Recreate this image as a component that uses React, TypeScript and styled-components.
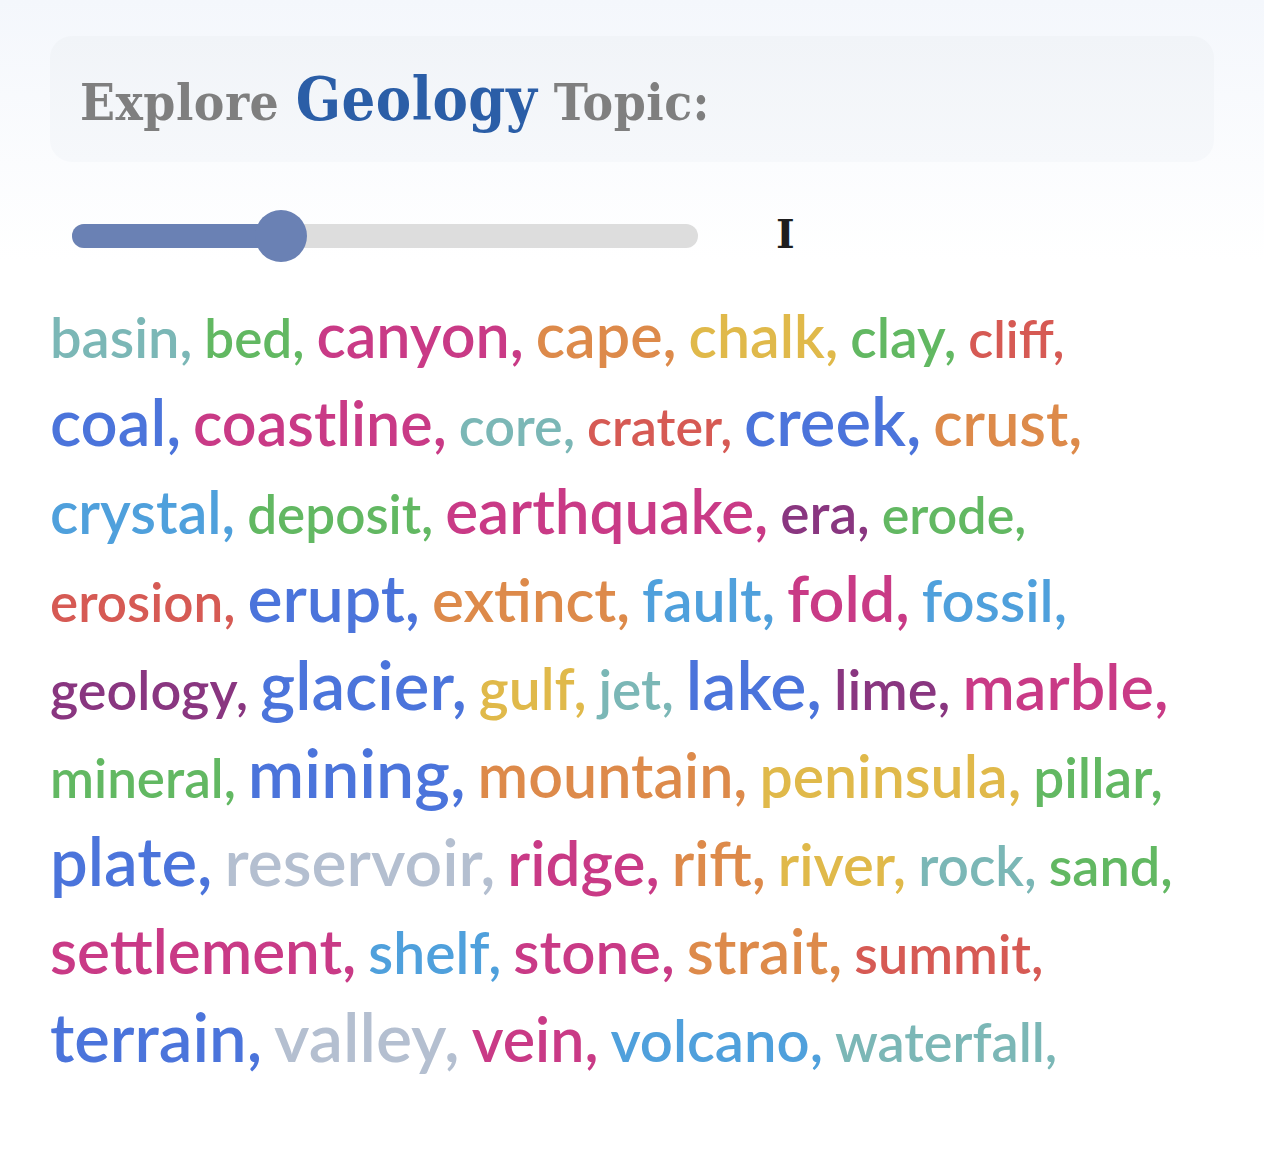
import React from "react";
import styled, { createGlobalStyle } from "styled-components";

const GlobalStyle = createGlobalStyle`
	html, body {
		margin: 0;
		padding: 0;
		background: #fff;
	}
	body {
		font-family: "Lato", "Liberation Sans", sans-serif;
	}
`;

const Page = styled.div`
	min-height: 1158px;
	background: linear-gradient(to bottom, #f4f7fc 0px, #ffffff 260px);
	padding: 36px 50px 0;
	box-sizing: border-box;
`;

const TitleCard = styled.div`
	display: flex;
	align-items: center;
	height: 126px;
	padding: 0 30px;
	border-radius: 22px;
	background: linear-gradient(to bottom, #f1f4f8, #f6f8fb);
`;

const Title = styled.h1`
	margin: 0;
	font-family: "DejaVu Serif Condensed", "DejaVu Serif", serif;
	font-weight: 700;
	font-size: 51px;
	color: #7f7f7f;
	letter-spacing: 0.5px;
`;

const Subject = styled.span`
	color: #2b5ea7;
	font-size: 59px;
`;

const SliderRow = styled.div`
	display: flex;
	align-items: center;
	height: 80px;
	margin-top: 34px;
	padding-left: 22px;
`;

const Track = styled.div`
	position: relative;
	width: 626px;
	height: 24px;
	border-radius: 12px;
	background: #dddddd;
`;

const Fill = styled.div`
	height: 100%;
	border-radius: 12px;
	background: #6a81b4;
`;

const Thumb = styled.div`
	position: absolute;
	top: 50%;
	width: 52px;
	height: 52px;
	margin: -26px 0 0 -26px;
	border-radius: 50%;
	background: #6a81b4;
`;

const Level = styled.span`
	margin: 0 0 6px 78px;
	font-family: "DejaVu Serif", serif;
	font-weight: 700;
	font-size: 40px;
	color: #1e1e1e;
`;

const Cloud = styled.p`
	margin: 20px 0 0;
	width: 1130px;
	font-size: 48px;
	line-height: 88px;
	font-weight: 600;
`;

const Word = styled.span<{ $color: string; $size: number }>`
	color: ${(p) => p.$color};
	font-size: ${(p) => p.$size}px;
	line-height: 1;
`;

const C = {
	teal: "#7bb7b6",
	green: "#62b862",
	magenta: "#c93a86",
	orange: "#dd8a4a",
	yellow: "#e0b94a",
	red: "#d65a54",
	blue: "#4b74db",
	sky: "#4fa0dc",
	purple: "#893680",
	gray: "#b4bfd0",
};

const words: [string, string, number][] = [
	["basin", C.teal, 56],
	["bed", C.green, 53],
	["canyon", C.magenta, 61],
	["cape", C.orange, 61],
	["chalk", C.yellow, 59],
	["clay", C.green, 55],
	["cliff", C.red, 52],
	["coal", C.blue, 65],
	["coastline", C.magenta, 61],
	["core", C.teal, 54],
	["crater", C.red, 52],
	["creek", C.blue, 67],
	["crust", C.orange, 61],
	["crystal", C.sky, 59],
	["deposit", C.green, 53],
	["earthquake", C.magenta, 62],
	["era", C.purple, 55],
	["erode", C.green, 52],
	["erosion", C.red, 53],
	["erupt", C.blue, 66],
	["extinct", C.orange, 60],
	["fault", C.sky, 59],
	["fold", C.magenta, 63],
	["fossil", C.sky, 58],
	["geology", C.purple, 54],
	["glacier", C.blue, 67],
	["gulf", C.yellow, 57],
	["jet", C.teal, 55],
	["lake", C.blue, 68],
	["lime", C.purple, 56],
	["marble", C.magenta, 63],
	["mineral", C.green, 53],
	["mining", C.blue, 68],
	["mountain", C.orange, 61],
	["peninsula", C.yellow, 59],
	["pillar", C.green, 55],
	["plate", C.blue, 67],
	["reservoir", C.gray, 66],
	["ridge", C.magenta, 62],
	["rift", C.orange, 61],
	["river", C.yellow, 58],
	["rock", C.teal, 55],
	["sand", C.green, 54],
	["settlement", C.magenta, 62],
	["shelf", C.sky, 57],
	["stone", C.magenta, 60],
	["strait", C.orange, 62],
	["summit", C.red, 54],
	["terrain", C.blue, 67],
	["valley", C.gray, 68],
	["vein", C.magenta, 61],
	["volcano", C.sky, 58],
	["waterfall", C.teal, 54],
];

export default function App() {
	const value = 1;
	const max = 3;
	const pct = (value / max) * 100;
	return (
		<Page>
			<GlobalStyle />
			<TitleCard>
				<Title>
					Explore <Subject>Geology</Subject> Topic:
				</Title>
			</TitleCard>
			<SliderRow>
				<Track>
					<Fill style={{ width: `${pct}%` }} />
					<Thumb style={{ left: `${pct}%` }} />
				</Track>
				<Level>I</Level>
			</SliderRow>
			<Cloud>
				{words.map(([w, color, size]) => (
					<React.Fragment key={w}>
						<Word $color={color} $size={size}>
							{w},
						</Word>{" "}
					</React.Fragment>
				))}
			</Cloud>
		</Page>
	);
}
